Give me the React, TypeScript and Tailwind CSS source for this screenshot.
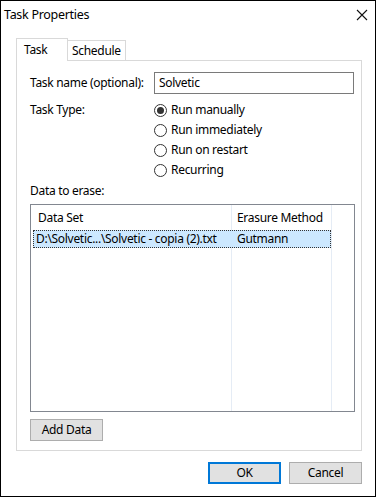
import React from 'react';

const font = { fontFamily: '"Noto Sans", "Segoe UI", sans-serif' };

const Radio = ({ checked, label }: { checked?: boolean; label: string }) => (
  <div className="flex h-[20px] items-center">
    <span className="flex h-[13px] w-[13px] items-center justify-center rounded-full border border-[#333333] bg-white">
      {checked && <span className="h-[7px] w-[7px] rounded-full bg-[#333333]" />}
    </span>
    <span className="ml-[4px]">{label}</span>
  </div>
);

export default function App() {
  return (
    <div
      className="relative flex h-[497px] w-[376px] flex-col border border-black bg-white text-[12px] leading-[16px] tracking-[-0.3px] text-black"
      style={font}
    >
      {/* title bar */}
      <div className="flex h-[28px] items-center justify-between pl-[3px] pr-[6px]">
        <span className="text-[12.5px]">Task Properties</span>
        <svg width="12" height="12" viewBox="0 0 12 12" className="mr-[1px]">
          <path d="M1 1 L11 11 M11 1 L1 11" stroke="#111" strokeWidth="1.1" />
        </svg>
      </div>

      {/* tabs */}
      <div className="ml-[15px] mt-[9px] flex items-end">
        <div className="z-10 -mb-px flex h-[23px] w-[52px] items-start border border-b-0 border-[#d9d9d9] bg-white pl-[7px] pt-[3px]">
          Task
        </div>
        <div className="flex h-[20px] w-[58px] items-center border border-l-0 border-b-0 border-[#d9d9d9] bg-white pl-[4px]">
          Schedule
        </div>
      </div>

      {/* panel */}
      <div className="ml-[15px] flex h-[391px] w-[346px] flex-col border border-[#d9d9d9] pl-[13px] pr-[7px]">
        <div className="mt-[11px] flex items-center">
          <span className="w-[124px]">Task name (optional):</span>
          <div className="flex h-[22px] w-[200px] items-center border border-[#7a7a7a] pl-[4px]">Solvetic</div>
        </div>

        <div className="mt-[6px] flex">
          <span className="flex h-[20px] w-[124px] items-center">Task Type:</span>
          <div className="flex flex-col">
            <Radio checked label="Run manually" />
            <Radio label="Run immediately" />
            <Radio label="Run on restart" />
            <Radio label="Recurring" />
          </div>
        </div>

        <div className="mt-[3px] flex h-[16px] items-center">Data to erase:</div>

        <div className="relative mt-[5px] h-[208px] w-[325px] border border-[#828790] pl-[2px]">
          <div className="absolute bottom-0 left-[200px] top-0 w-px bg-[#e5ecf5]" />
          <div className="absolute bottom-0 left-[300px] top-0 w-px bg-[#e5ecf5]" />
          <div className="flex h-[25px] items-center">
            <span className="w-[198px] pl-[5px]">Data Set</span>
            <span className="pl-[6px]">Erasure Method</span>
          </div>
          <div className="relative flex h-[18px] w-[298px] items-center border border-dotted border-[#333] bg-[#cce8ff]">
            <span className="w-[197px] pl-[2px]">D:\Solvetic...\Solvetic - copia (2).txt</span>
            <span className="pl-[6px]">Gutmann</span>
          </div>
        </div>

        <button className="mt-[7px] flex h-[22px] w-[73px] items-center justify-center border border-[#adadad] bg-[#e1e1e1]">
          Add Data
        </button>
      </div>

      {/* footer */}
      <div className="mt-[11px] flex justify-end gap-[8px] pr-[13px]">
        <button className="flex h-[22px] w-[73px] items-center justify-center border-2 border-[#0078d7] bg-[#e1e1e1]">
          OK
        </button>
        <button className="flex h-[22px] w-[73px] items-center justify-center border border-[#adadad] bg-[#e1e1e1]">
          Cancel
        </button>
      </div>
    </div>
  );
}
